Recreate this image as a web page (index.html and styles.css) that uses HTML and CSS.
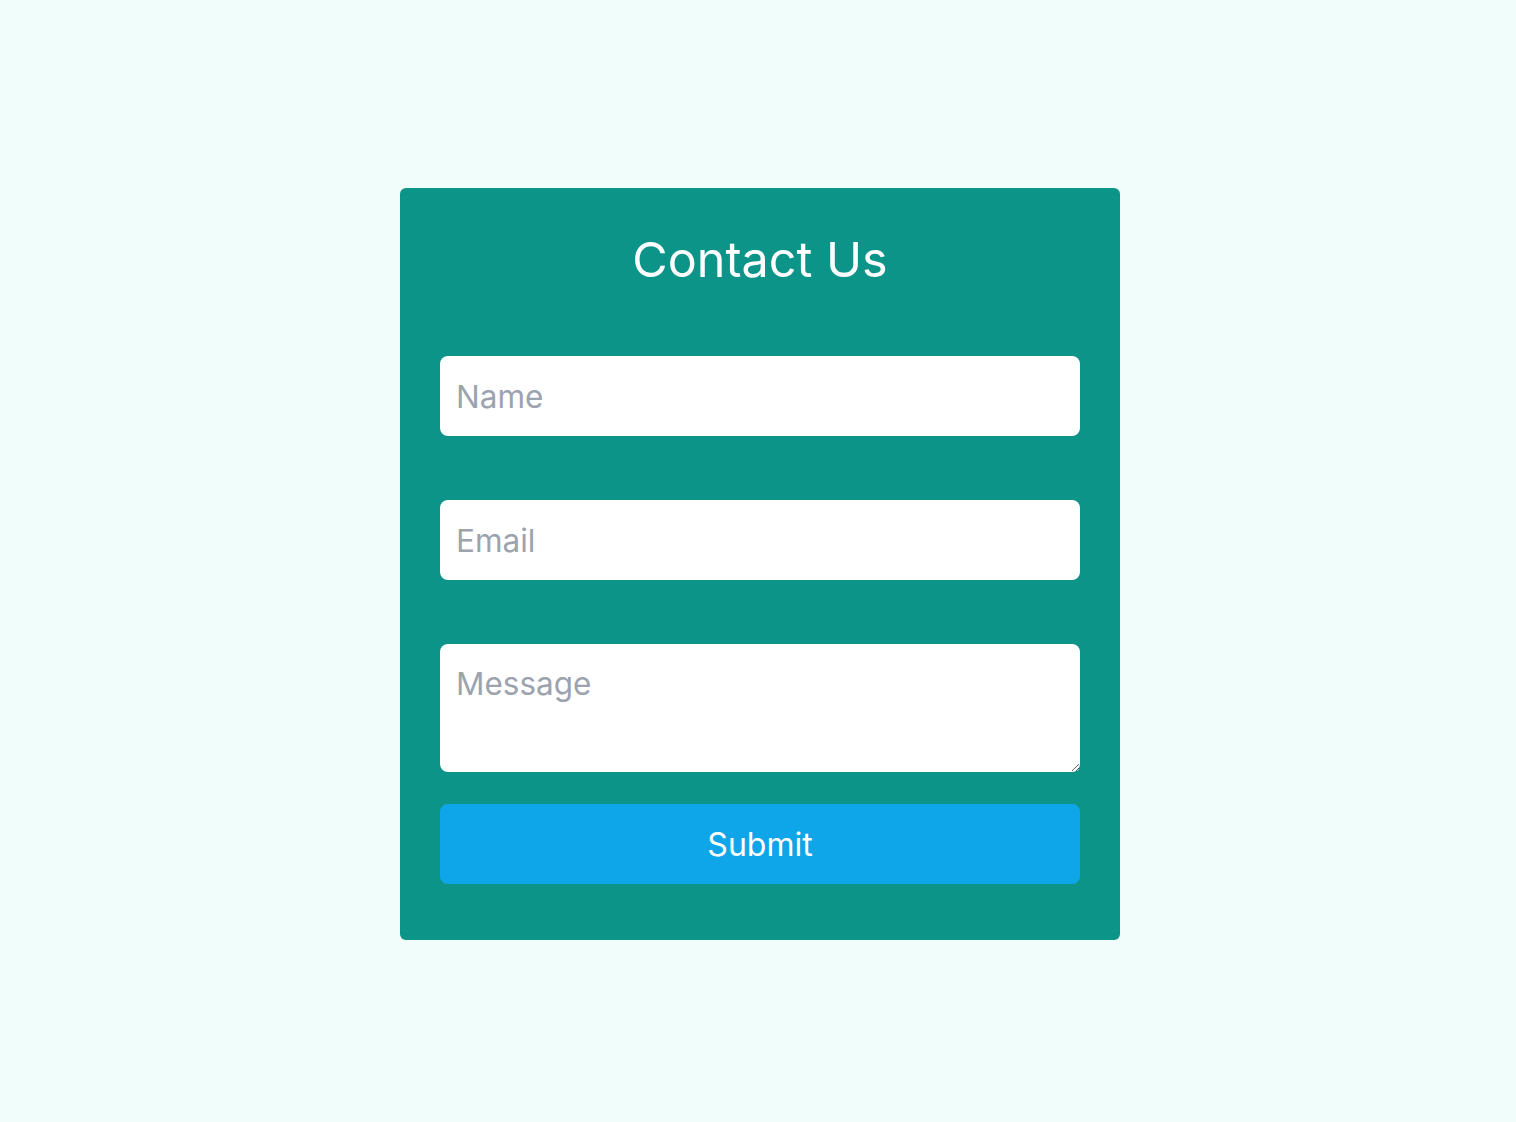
FILE: index.html
```html
<!DOCTYPE html>
<html lang="en">
<head>
<meta charset="utf-8">
<title>Contact Us</title>
<link rel="stylesheet" href="styles.css">
</head>
<body>
<main class="page">
  <section class="card">
    <h1 class="title">Contact Us</h1>
    <form class="form">
      <input class="field" type="text" placeholder="Name">
      <input class="field" type="email" placeholder="Email">
      <textarea class="field area" placeholder="Message"></textarea>
      <button class="submit" type="button">Submit</button>
    </form>
  </section>
</main>
</body>
</html>
```
FILE: styles.css
```css
* { box-sizing: border-box; }
html, body { margin: 0; padding: 0; }
body {
  background: #f0fdfa;
  font-family: Inter, "Noto Sans", sans-serif;
}
.page {
  min-height: 100vh;
  display: flex;
  align-items: center;
  justify-content: center;
  padding: 6px 0 0 4px;
}
.card {
  width: 720px;
  background: #0d9488;
  border-radius: 6px;
  padding: 40px 40px 56px;
}
.title {
  margin: 0 0 64px;
  font-size: 48.5px;
  line-height: 64px;
  font-weight: 400;
  color: #ffffff;
  text-align: center;
}
.form {
  display: flex;
  flex-direction: column;
}
.field {
  display: block;
  width: 100%;
  height: 80px;
  margin: 0 0 64px;
  padding: 0 16px;
  border: none;
  border-radius: 8px;
  background: #ffffff;
  font-family: inherit;
  font-size: 31.5px;
  color: #111827;
  outline: none;
}
.field::placeholder { color: #9ca3af; }
.area {
  height: 128px;
  margin-bottom: 32px;
  padding: 16px 16px;
  line-height: 48px;
  resize: vertical;
}
.submit {
  height: 80px;
  width: 100%;
  border: none;
  border-radius: 8px;
  background: #0ea5e9;
  color: #ffffff;
  font-family: inherit;
  font-size: 32px;
  cursor: pointer;
}
```
